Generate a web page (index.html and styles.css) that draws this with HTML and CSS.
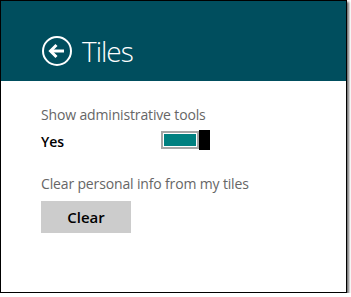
FILE: index.html
```html
<!DOCTYPE html>
<html lang="en">
<head>
<meta charset="UTF-8">
<title>Tiles</title>
<link rel="stylesheet" href="styles.css">
</head>
<body>

  <div class="pane">
    <div class="header">
      <svg class="back" width="32" height="32" viewBox="0 0 32 32">
        <circle cx="16" cy="16" r="14" fill="none" stroke="#fff" stroke-width="2"/>
        <path d="M9.5 16 H23" fill="none" stroke="#fff" stroke-width="3"/>
        <path d="M15.5 10 L9.5 16 L15.5 22" fill="none" stroke="#fff" stroke-width="3"/>
      </svg>
      <h1>Tiles</h1>
    </div>

    <div class="settings">
      <div class="setting">
        <div class="label">Show administrative tools</div>
        <div class="toggle-row">
          <span class="value">Yes</span>
          <span class="toggle"><span class="track"></span><span class="thumb"></span></span>
        </div>
      </div>

      <div class="setting">
        <div class="label">Clear personal info from my tiles</div>
        <button>Clear</button>
      </div>
    </div>
  </div>

</body>
</html>
```

FILE: styles.css
```css
body { margin: 0; background: #fff; font-family: "Open Sans", "Noto Sans", sans-serif; }

.pane { width: 345px; height: 291px; border: 1px solid #000; background: #fff; box-shadow: 2px 2px 2px rgba(0,0,0,0.55); }

.header { height: 80px; background: #004e5e; color: #fff; display: flex; align-items: center; padding: 20px 0 0 40px; box-sizing: border-box; }
.header .back { display: block; width: 32px; height: 32px; margin-right: 9px; }
.header h1 { margin: 0; font-size: 28px; font-weight: 300; line-height: 32px; letter-spacing: -1px; }

.settings { padding: 24px 0 0 40px; }
.setting { margin-bottom: 19px; }
.label { font-size: 14px; color: #666; line-height: 20px; letter-spacing: -0.15px; }

.toggle-row { display: flex; align-items: center; height: 30px; }
.value { width: 120px; font-size: 14px; font-weight: 600; color: #000; padding-top: 3px; }
.toggle { display: flex; align-items: center; }
.track { width: 32px; height: 12px; background: #008080; border: 2px solid #a6a6a6; box-shadow: inset 0 0 0 1px #fff; padding: 1px; background-clip: content-box; }
.thumb { width: 11px; height: 20px; background: #000; }

button { display: block; margin-top: 7px; width: 90px; height: 32px; background: #ccc; border: none; font-family: inherit; font-size: 15px; font-weight: 600; color: #000; padding: 0; }
```
